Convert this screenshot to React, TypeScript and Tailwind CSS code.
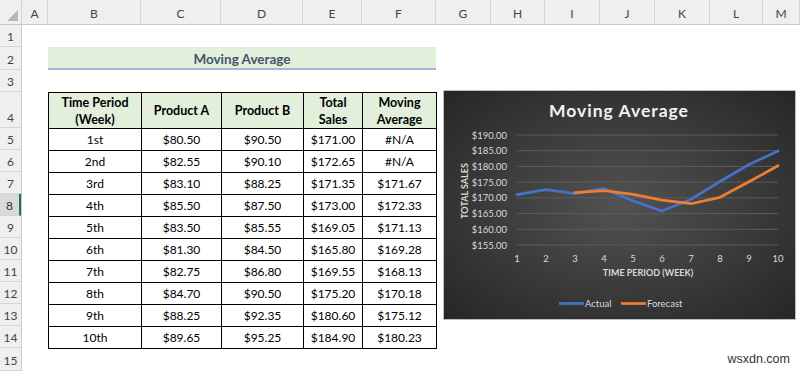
import React from "react";

const colHeaders: { label: string; cls: string }[] = [
  { label: "A", cls: "w-[26px]" },
  { label: "B", cls: "w-[93px]" },
  { label: "C", cls: "w-[80px]" },
  { label: "D", cls: "w-[82px]" },
  { label: "E", cls: "w-[59px]" },
  { label: "F", cls: "w-[74px]" },
  { label: "G", cls: "w-[55px]" },
  { label: "H", cls: "w-[54px]" },
  { label: "I", cls: "w-[55px]" },
  { label: "J", cls: "w-[55px]" },
  { label: "K", cls: "w-[55px]" },
  { label: "L", cls: "w-[53px]" },
  { label: "M", cls: "w-[37px]" },
];

const rowHeaders: { n: number; cls: string }[] = [
  { n: 1, cls: "h-[22px]" },
  { n: 2, cls: "h-[23px]" },
  { n: 3, cls: "h-[22px]" },
  { n: 4, cls: "h-[36px]" },
  { n: 5, cls: "h-[22px]" },
  { n: 6, cls: "h-[22px]" },
  { n: 7, cls: "h-[22px]" },
  { n: 8, cls: "h-[22px]" },
  { n: 9, cls: "h-[22px]" },
  { n: 10, cls: "h-[22px]" },
  { n: 11, cls: "h-[22px]" },
  { n: 12, cls: "h-[22px]" },
  { n: 13, cls: "h-[22px]" },
  { n: 14, cls: "h-[22px]" },
  { n: 15, cls: "h-[23px]" },
];

const data: string[][] = [
  ["1st", "$80.50", "$90.50", "$171.00", "#N/A"],
  ["2nd", "$82.55", "$90.10", "$172.65", "#N/A"],
  ["3rd", "$83.10", "$88.25", "$171.35", "$171.67"],
  ["4th", "$85.50", "$87.50", "$173.00", "$172.33"],
  ["5th", "$83.50", "$85.55", "$169.05", "$171.13"],
  ["6th", "$81.30", "$84.50", "$165.80", "$169.28"],
  ["7th", "$82.75", "$86.80", "$169.55", "$168.13"],
  ["8th", "$84.70", "$90.50", "$175.20", "$170.18"],
  ["9th", "$88.25", "$92.35", "$180.60", "$175.12"],
  ["10th", "$89.65", "$95.25", "$184.90", "$180.23"],
];

const actual = [171, 172.65, 171.35, 173, 169.05, 165.8, 169.55, 175.2, 180.6, 184.9];
const forecast = [171.67, 172.33, 171.13, 169.28, 168.13, 170.18, 175.12, 180.23];

const xOf = (i: number) => 74 + i * 29;
const yOf = (v: number) => 45 + ((190 - v) * 110) / 35;

function Chart() {
  const actualPts = actual.map((v, i) => `${xOf(i)},${yOf(v)}`).join(" ");
  const forecastPts = forecast.map((v, i) => `${xOf(i + 2)},${yOf(v)}`).join(" ");
  const ticks = [190, 185, 180, 175, 170, 165, 160, 155];
  return (
    <svg width="353" height="230" viewBox="0 0 353 230" className="block">
      <defs>
        <radialGradient id="bg" cx="50%" cy="50%" r="70%">
          <stop offset="0%" stopColor="#525252" />
          <stop offset="100%" stopColor="#262626" />
        </radialGradient>
      </defs>
      <rect x="0" y="0" width="353" height="230" fill="url(#bg)" />
      <rect x="0.5" y="0.5" width="352" height="229" fill="none" stroke="#bdbdbd" strokeWidth="1" />
      <text
        x="176"
        y="27"
        textAnchor="middle"
        fill="#f2f2f2"
        fontSize="17.5"
        fontWeight="700"
        letterSpacing="1"
        fontFamily="Lato, sans-serif"
      >
        Moving Average
      </text>
      {ticks.map((t) => (
        <g key={t}>
          <line x1="74" x2="335" y1={yOf(t)} y2={yOf(t)} stroke="#5c5c5c" strokeWidth="1" />
          <text
            x="64"
            y={yOf(t) + 3.5}
            textAnchor="end"
            fill="#d9d9d9"
            fontSize="9.5"
            fontFamily="Lato, sans-serif"
          >
            ${t.toFixed(2)}
          </text>
        </g>
      ))}
      {actual.map((_, i) => (
        <text
          key={i}
          x={xOf(i)}
          y="172"
          textAnchor="middle"
          fill="#d9d9d9"
          fontSize="9.5"
          fontFamily="Lato, sans-serif"
        >
          {i + 1}
        </text>
      ))}
      <text
        x="205"
        y="186"
        textAnchor="middle"
        fill="#d9d9d9"
        fontSize="9"
        fontWeight="700"
        fontFamily="Lato, sans-serif"
      >
        TIME PERIOD (WEEK)
      </text>
      <text
        x="25"
        y="101"
        transform="rotate(-90 25 101)"
        textAnchor="middle"
        fill="#d9d9d9"
        fontSize="9"
        fontWeight="700"
        fontFamily="Lato, sans-serif"
      >
        TOTAL SALES
      </text>
      <polyline
        points={actualPts}
        fill="none"
        stroke="#4472c4"
        strokeWidth="2.75"
        strokeLinejoin="round"
        strokeLinecap="round"
      />
      <polyline
        points={forecastPts}
        fill="none"
        stroke="#ed7d31"
        strokeWidth="2.75"
        strokeLinejoin="round"
        strokeLinecap="round"
      />
      <line x1="116" x2="141" y1="213.5" y2="213.5" stroke="#4472c4" strokeWidth="2.75" />
      <text x="142" y="217" fill="#d9d9d9" fontSize="9.5" fontFamily="Lato, sans-serif">
        Actual
      </text>
      <line x1="178" x2="203" y1="213.5" y2="213.5" stroke="#ed7d31" strokeWidth="2.75" />
      <text x="204" y="217" fill="#d9d9d9" fontSize="9.5" fontFamily="Lato, sans-serif">
        Forecast
      </text>
    </svg>
  );
}

export default function App() {
  const cellCols = "grid grid-cols-[93px_80px_82px_59px_74px]";
  return (
    <div className="w-[800px] h-[371px] bg-white overflow-hidden relative font-['Lato',sans-serif] text-black">
      {/* Column header bar */}
      <div className="flex h-[25px] bg-[#efefef] border-b border-[#c9c9c9]">
        <div className="w-[22px] h-full border-r border-[#d4d4d4] relative flex items-end justify-end pr-[3px] pb-[3px]">
          <svg width="11" height="11" viewBox="0 0 11 11">
            <polygon points="11,0 11,11 0,11" fill="#b7b7b7" />
          </svg>
        </div>
        {colHeaders.map((c) => (
          <div
            key={c.label}
            className={`${c.cls} h-full border-r border-[#d6d6d6] flex items-center justify-center pt-[3px] text-[12px] text-[#444]`}
          >
            {c.label}
          </div>
        ))}
      </div>

      {/* Body */}
      <div className="flex">
        {/* Row headers */}
        <div className="w-[22px] flex flex-col bg-[#efefef] border-r border-[#c9c9c9]">
          {rowHeaders.map((r) => (
            <div
              key={r.n}
              className={`${r.cls} ${
                r.n === 8 ? "bg-[#d9d9d9] text-[#333] border-r-2 border-r-[#217346]" : "text-[#444]"
              } border-b border-[#d6d6d6] flex items-end justify-center pb-[1px] text-[12px] leading-[16px]`}
            >
              {r.n}
            </div>
          ))}
        </div>

        {/* Column A */}
        <div className="w-[26px]" />

        {/* Columns B-F */}
        <div className="w-[388px] flex flex-col">
          <div className="h-[22px]" />
          <div className="h-[23px] bg-[#e2efda] border-b-2 border-[#a4b6d8] flex items-center justify-center pt-[3px] text-[13.5px] font-bold text-[#44546a]">
            Moving Average
          </div>
          <div className="h-[22px]" />
          <div className="border-t border-l border-black w-[389px]">
            <div className={`${cellCols} h-[36px] bg-[#e2efda]`}>
              {["Time Period (Week)", "Product A", "Product B", "Total Sales", "Moving Average"].map(
                (h, i) => (
                  <div
                    key={i}
                    className="border-r border-b border-black flex items-center justify-center text-center text-[12.5px] font-bold leading-[17px] px-[2px]"
                  >
                    {h === "Time Period (Week)" ? (
                      <span>
                        Time Period
                        <br />
                        (Week)
                      </span>
                    ) : h === "Total Sales" ? (
                      <span>
                        Total
                        <br />
                        Sales
                      </span>
                    ) : h === "Moving Average" ? (
                      <span>
                        Moving
                        <br />
                        Average
                      </span>
                    ) : (
                      h
                    )}
                  </div>
                )
              )}
            </div>
            {data.map((row, ri) => (
              <div key={ri} className={`${cellCols} h-[22px]`}>
                {row.map((v, ci) => (
                  <div
                    key={ci}
                    className="border-r border-b border-black flex items-center justify-center text-[12px] leading-none"
                  >
                    {v}
                  </div>
                ))}
              </div>
            ))}
          </div>
        </div>

        {/* Columns G-M with chart object */}
        <div className="flex-1 flex flex-col pt-[65px] pl-[7px]">
          <Chart />
        </div>
      </div>

      {/* watermark */}
      <div className="absolute right-[10px] bottom-[2px] text-[12.5px] text-[#333] font-['Liberation_Sans',Arial,sans-serif]">
        wsxdn.com
      </div>
    </div>
  );
}
